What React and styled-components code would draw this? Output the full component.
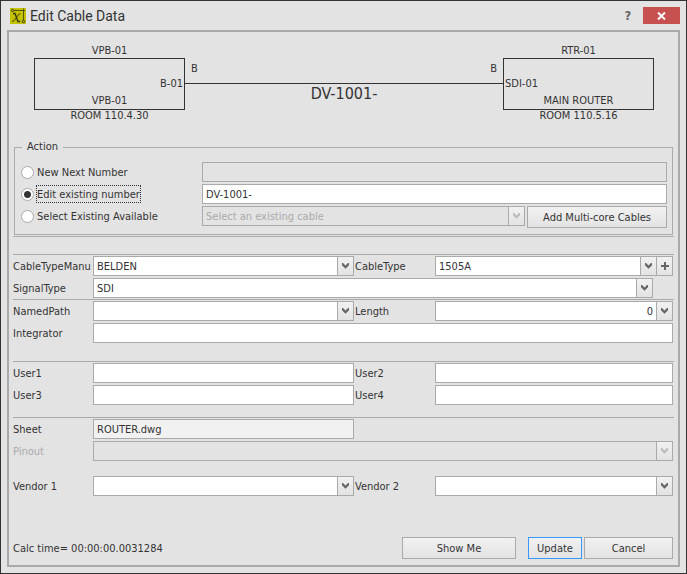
import React from "react"
import styled, { createGlobalStyle } from "styled-components"

const GlobalStyle = createGlobalStyle`
  *, *::before, *::after {
    box-sizing: border-box;
  }

  body {
    margin: 0;
    background-color: #e3e3e3;
    color: #333;
    font-family: "DejaVu Sans Condensed", "DejaVu Sans", sans-serif;
    font-size: 11px;
    line-height: 16px;
  }

  input, select, button {
    margin: 0;
    color: inherit;
    font: inherit;
  }
`

const Dialog = styled.div`
  display: flex;
  flex-direction: column;
  min-height: 100vh;
  padding: 0 6px 6px;
  border: 1px solid #333;
  background-color: #e3e3e3;
`

const TitleBar = styled.header`
  display: flex;
  align-items: center;
  height: 29px;
  padding-left: 3px;

  h1 {
    flex: 1;
    margin: 0 0 0 4px;
    font-family: Roboto, sans-serif;
    font-size: 14px;
    font-weight: 400;
  }
`

const TitleButton = styled.button`
  display: flex;
  align-items: center;
  justify-content: center;
  width: ${props => (props.$close ? "37px" : "30px")};
  height: 17px;
  padding: 0;
  border: 0;
  background-color: ${props => (props.$close ? "#c75050" : "transparent")};
  color: ${props => (props.$close ? "#fff" : "#666")};
  font-size: 13px;
  font-weight: 700;
`

const Panel = styled.main`
  display: flex;
  flex: 1;
  flex-direction: column;
  padding: 12px 4px 6px;
  border: 2px solid #aaa;
`

const Diagram = styled.section`
  display: flex;
  padding: 0 20px 0 21px;
`

const Device = styled.div`
  width: 151px;
  text-align: center;
`

const DeviceName = styled.div`
  line-height: 14px;
`

const DeviceRoom = styled.div`
  line-height: 12px;
`

const DeviceBox = styled.div`
  display: flex;
  flex-direction: column;
  justify-content: flex-end;
  height: 52px;
  border: 1px solid #333;
`

const Port = styled.span`
  padding: 0 1px 1px;
  text-align: ${props => props.$side};
`

const Wire = styled.div`
  flex: 1;
  padding-top: 17px;
  text-align: center;
`

const WireEnds = styled.div`
  display: flex;
  justify-content: space-between;
  height: 23px;
  padding: 0 6px;
  border-bottom: 1px solid #333;
`

const WireName = styled.div`
  font-size: 16px;
  line-height: 20px;
`

const ActionBox = styled.fieldset`
  display: grid;
  grid-template-columns: 181px 1fr;
  row-gap: 2px;
  min-width: 0;
  margin: 17px 1px 1px;
  padding: 7px 5px 6px 6px;
  border: 1px solid #aaa;

  legend {
    margin-left: 1px;
    padding: 0 5px;
  }
`

const RadioLabel = styled.label`
  display: flex;
  align-items: center;
  gap: 2px;
  height: 20px;

  span {
    padding: 2px 1px 0;
    outline: ${props => (props.$focused ? "1px dotted #333" : "none")};
    outline-offset: -1px;
  }
`

const Radio = styled.input.attrs({ type: "radio" })`
  appearance: none;
  width: 13px;
  height: 13px;
  border: 1px solid #aaa;
  border-radius: 50%;
  background-color: #fff;

  &:checked {
    background-image: radial-gradient(circle, #333 3px, transparent 4px);
  }
`

const Field = styled.input`
  width: 100%;
  min-width: 0;
  height: 20px;
  padding: 0 3px;
  border: 1px solid #aaa;
  border-radius: 0;
  outline: none;
  background-color: #fff;

  &:read-only {
    background-color: #f1f1f1;
  }

  &:disabled {
    background-color: #e3e3e3;
    color: #aaa;
  }
`

const ComboBox = styled.div`
  display: flex;
  flex: 1;
  min-width: 0;
  height: 20px;
  border: 1px solid #aaa;
  background-color: ${props => (props.$disabled ? "#e3e3e3" : "#fff")};
  color: ${props => (props.$disabled ? "#aaa" : "inherit")};

  select, input {
    flex: 1;
    min-width: 0;
    padding: 2px 3px 0;
    appearance: none;
    border: 0;
    outline: none;
    background-color: transparent;
    opacity: 1;
  }

  input {
    text-align: right;
  }
`

const Arrow = styled.span`
  display: flex;
  align-items: center;
  justify-content: center;
  width: 16px;
  border-left: 1px solid #aaa;
  background-image: linear-gradient(#f1f1f1, #e3e3e3);
  color: ${props => (props.$disabled ? "#bbb" : "#666")};
  pointer-events: none;
`

const Button = styled.button`
  width: ${props => props.$width};
  height: 22px;
  padding: 2px 0 0;
  border: 1px solid ${props => (props.$primary ? "#3399ff" : "#aaa")};
  background-image: linear-gradient(#f1f1f1, #e3e3e3);
`

const AddButton = styled(Button)`
  display: flex;
  align-items: center;
  justify-content: center;
  height: 20px;
  padding: 0;
  border-left: 0;
  color: #666;
`

const Inline = styled.div`
  display: flex;
  gap: ${props => props.$gap || "0"};
  min-width: 0;
`

const Group = styled.section`
  display: grid;
  grid-template-columns: 80px 261fr 81px 238fr;
  gap: 2px 0;
  padding: 1px 1px ${props => props.$bottom || "0"} 0;
  border-top: 1px solid #aaa;
`

const Rule = styled.hr`
  width: 100%;
  height: 1px;
  margin: 0 0 17px;
  border: 0;
  background-color: #aaa;
`

const Label = styled.label`
  padding: 2px 0 0 ${props => (props.$second ? "1px" : "0")};
  line-height: 18px;
  white-space: nowrap;
  color: ${props => (props.$disabled ? "#aaa" : "inherit")};
`

const Wide = styled.div`
  display: flex;
  grid-column: 2 / -1;
  padding-right: ${props => props.$inset || "0"};
`

const VendorRow = styled.div`
  display: grid;
  grid-template-columns: 80px 261fr 81px 238fr;
  padding-right: 1px;
`

const Footer = styled.footer`
  display: flex;
  align-items: center;
  margin-top: auto;
  padding: 40px 1px 0 0;

  output {
    flex: 1;
    padding-top: 2px;
  }

  button + button {
    margin-left: 12px;
  }

  button:last-child {
    margin-left: 2px;
  }
`

const Chevron = () => (
  <svg width="7" height="6" viewBox="0 0 7 6" aria-hidden="true">
    <path d="M0 0H1L3.5 2.5L6 0H7V2.2L3.5 5.7L0 2.2Z" fill="currentColor" />
  </svg>
)

const AppIcon = () => (
  <svg width="16" height="16" viewBox="0 0 16 16" aria-hidden="true">
    <rect width="16" height="16" fill="#c4c200" />
    <g fill="none" stroke="#3a3a10" strokeWidth="1">
      <circle cx="2.5" cy="2.5" r="1.1" />
      <path d="M4 2.5H15M13.5 0.5V12" strokeWidth="0.8" />
      <circle cx="13.5" cy="13.5" r="1.2" />
      <path d="M3 5.5H5L8 13.5H10.2" strokeWidth="1.4" />
      <path d="M10.5 5.8H9.2L3.6 13.2H2" strokeWidth="0.9" />
    </g>
  </svg>
)

const Combo = ({ id, value = "", disabled, label }) => (
  <ComboBox $disabled={disabled}>
    <select id={id} defaultValue={value} disabled={disabled} aria-label={label}>
      <option value={value}>{value}</option>
    </select>
    <Arrow $disabled={disabled}>
      <Chevron />
    </Arrow>
  </ComboBox>
)

const App = () => {
  return (
    <>
      <GlobalStyle />
      <Dialog role="dialog" aria-labelledby="title">
        <TitleBar>
          <AppIcon />
          <h1 id="title">Edit Cable Data</h1>
          <TitleButton type="button">?</TitleButton>
          <TitleButton type="button" $close aria-label="Close">
            <svg width="9" height="8" viewBox="0 0 9 8" aria-hidden="true">
              <path d="M1 0.5L8 7.5M8 0.5L1 7.5" stroke="#fff" strokeWidth="2" />
            </svg>
          </TitleButton>
        </TitleBar>
        <Panel>
          <Diagram>
            <Device>
              <DeviceName>VPB-01</DeviceName>
              <DeviceBox>
                <Port $side="right">B-01</Port>
                <span>VPB-01</span>
              </DeviceBox>
              <DeviceRoom>ROOM 110.4.30</DeviceRoom>
            </Device>
            <Wire>
              <WireEnds>
                <span>B</span>
                <span>B</span>
              </WireEnds>
              <WireName>DV-1001-</WireName>
            </Wire>
            <Device>
              <DeviceName>RTR-01</DeviceName>
              <DeviceBox>
                <Port $side="left">SDI-01</Port>
                <span>MAIN ROUTER</span>
              </DeviceBox>
              <DeviceRoom>ROOM 110.5.16</DeviceRoom>
            </Device>
          </Diagram>

          <ActionBox>
            <legend>Action</legend>
            <RadioLabel>
              <Radio name="action" />
              <span>New Next Number</span>
            </RadioLabel>
            <Field disabled aria-label="Next number" />
            <RadioLabel $focused>
              <Radio name="action" defaultChecked />
              <span>Edit existing number</span>
            </RadioLabel>
            <Field defaultValue="DV-1001-" aria-label="Existing number" />
            <RadioLabel>
              <Radio name="action" />
              <span>Select Existing Available</span>
            </RadioLabel>
            <Inline $gap="2px">
              <Combo value="Select an existing cable" disabled label="Existing cable" />
              <Button type="button" $width="140px">
                Add Multi-core Cables
              </Button>
            </Inline>
          </ActionBox>
          <Rule />

          <Group $bottom="1px">
            <Label htmlFor="manu">CableTypeManu</Label>
            <Combo id="manu" value="BELDEN" />
            <Label htmlFor="type" $second>CableType</Label>
            <Inline>
              <Combo id="type" value="1505A" />
              <AddButton type="button" $width="16px" aria-label="Add cable type">
                <svg width="8" height="8" viewBox="0 0 8 8" aria-hidden="true">
                  <path d="M4 0V8M0 4H8" stroke="currentColor" strokeWidth="2" />
                </svg>
              </AddButton>
            </Inline>
            <Label htmlFor="signal">SignalType</Label>
            <Wide $inset="20px">
              <Combo id="signal" value="SDI" />
            </Wide>
          </Group>

          <Group $bottom="18px">
            <Label htmlFor="path">NamedPath</Label>
            <Combo id="path" />
            <Label htmlFor="length" $second>Length</Label>
            <ComboBox>
              <input id="length" defaultValue="0" />
              <Arrow>
                <Chevron />
              </Arrow>
            </ComboBox>
            <Label htmlFor="integrator">Integrator</Label>
            <Wide>
              <Field id="integrator" />
            </Wide>
          </Group>

          <Group $bottom="12px">
            {[1, 2, 3, 4].map(n => (
              <React.Fragment key={n}>
                <Label htmlFor={`user${n}`} $second={n % 2 === 0}>
                  {`User${n}`}
                </Label>
                <Field id={`user${n}`} />
              </React.Fragment>
            ))}
          </Group>

          <Group $bottom="15px">
            <Label htmlFor="sheet">Sheet</Label>
            <Field id="sheet" defaultValue="ROUTER.dwg" readOnly />
            <span />
            <span />
            <Label htmlFor="pinout" $disabled>Pinout</Label>
            <Wide>
              <Combo id="pinout" disabled />
            </Wide>
          </Group>

          <VendorRow>
            <Label htmlFor="vendor1">Vendor 1</Label>
            <Combo id="vendor1" />
            <Label htmlFor="vendor2" $second>Vendor 2</Label>
            <Combo id="vendor2" />
          </VendorRow>

          <Footer>
            <output>Calc time= 00:00:00.0031284</output>
            <Button type="button" $width="114px">Show Me</Button>
            <Button type="button" $width="54px" $primary>Update</Button>
            <Button type="button" $width="89px">Cancel</Button>
          </Footer>
        </Panel>
      </Dialog>
    </>
  )
}

export default App
